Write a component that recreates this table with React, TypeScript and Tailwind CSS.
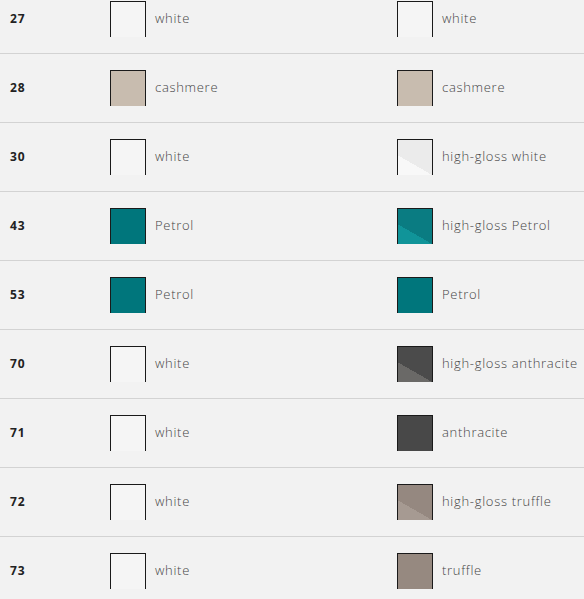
const rows: { num: string; a: string; aName: string; b: string; bName: string }[] = [
  { num: "27", a: "white", aName: "white", b: "white", bName: "white" },
  { num: "28", a: "cashmere", aName: "cashmere", b: "cashmere", bName: "cashmere" },
  { num: "30", a: "white", aName: "white", b: "glossWhite", bName: "high-gloss white" },
  { num: "43", a: "petrol", aName: "Petrol", b: "glossPetrol", bName: "high-gloss Petrol" },
  { num: "53", a: "petrol", aName: "Petrol", b: "petrol", bName: "Petrol" },
  { num: "70", a: "white", aName: "white", b: "glossAnthracite", bName: "high-gloss anthracite" },
  { num: "71", a: "white", aName: "white", b: "anthracite", bName: "anthracite" },
  { num: "72", a: "white", aName: "white", b: "glossTruffle", bName: "high-gloss truffle" },
  { num: "73", a: "white", aName: "white", b: "truffle", bName: "truffle" },
];

const swatchClass: Record<string, string> = {
  white: "bg-[#f5f5f5]",
  cashmere: "bg-[#c8bcaf]",
  petrol: "bg-[#00767c]",
  anthracite: "bg-[#484848]",
  truffle: "bg-[#968980]",
  // high-gloss swatches: lighter lower-left triangle
  glossWhite: "bg-[linear-gradient(30deg,#f8f8f8_36%,#ebebeb_36%)]",
  glossPetrol: "bg-[linear-gradient(30deg,#109499_36%,#0a7c82_36%)]",
  glossAnthracite: "bg-[linear-gradient(30deg,#6a6967_36%,#4b4b4b_36%)]",
  glossTruffle: "bg-[linear-gradient(30deg,#a69a92_36%,#958880_36%)]",
};

function Swatch({ kind, label }: { kind: string; label: string }) {
  return (
    <div className="flex items-center gap-[9px]">
      <div className={`h-[36px] w-[36px] border-x border-t border-[#1a1a1a] ${swatchClass[kind]}`} />
      <span className="text-[13px] font-light tracking-[0.7px] text-[#444]">{label}</span>
    </div>
  );
}

export default function App() {
  return (
    <div className="min-h-screen overflow-hidden bg-[#f2f2f2] font-['Open_Sans',sans-serif]">
      <div className="-mt-[15px]">
        {rows.map((r) => (
          <div
            key={r.num}
            className="grid h-[69px] grid-cols-[110px_287px_1fr] items-center border-b border-[#d3d3d3]"
          >
            <span className="pl-[10px] text-[12px] font-bold tracking-[1px] text-[#222]">{r.num}</span>
            <Swatch kind={r.a} label={r.aName} />
            <Swatch kind={r.b} label={r.bName} />
          </div>
        ))}
      </div>
    </div>
  );
}
